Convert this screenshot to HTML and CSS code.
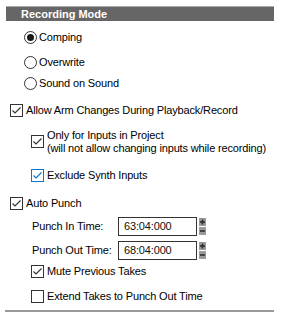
FILE: index.html
```html
<!DOCTYPE html>
<html>
<head>
<meta charset="utf-8">
<link rel="stylesheet" href="styles.css">
</head>
<body>
<div class="panel">
  <div class="header">Recording Mode</div>

  <div class="row radio-row r-comping"><span class="radio checked"></span><span class="lbl">Comping</span></div>
  <div class="row radio-row r-overwrite"><span class="radio"></span><span class="lbl">Overwrite</span></div>
  <div class="row radio-row r-sos"><span class="radio"></span><span class="lbl">Sound on Sound</span></div>

  <div class="row lvl1 r-allow"><span class="cb"><svg viewBox="0 0 11 11"><path d="M1.5 5.5 L4 8 L9.5 2.5" /></svg></span><span class="lbl">Allow Arm Changes During Playback/Record</span></div>

  <div class="row lvl2 two r-only"><span class="cb"><svg viewBox="0 0 11 11"><path d="M1.5 5.5 L4 8 L9.5 2.5" /></svg></span><span class="lbl">Only for Inputs in Project<br>(will not allow changing inputs while recording)</span></div>

  <div class="row lvl2 r-excl"><span class="cb blue"><svg viewBox="0 0 11 11"><path d="M1.5 5.5 L4 8 L9.5 2.5" /></svg></span><span class="lbl">Exclude Synth Inputs</span></div>

  <div class="row lvl1 r-auto"><span class="cb"><svg viewBox="0 0 11 11"><path d="M1.5 5.5 L4 8 L9.5 2.5" /></svg></span><span class="lbl">Auto Punch</span></div>

  <div class="row field r-in"><span class="flbl">Punch In Time:</span><span class="input">63:04:000</span><span class="spin"><svg viewBox="0 0 7 17"><rect x="0" y="0" width="7" height="8" fill="#9a9a9a"/><rect x="0" y="9" width="7" height="8" fill="#9a9a9a"/><path d="M1 4 H6 M3.5 1.5 V6.5 M1 13 H6" stroke="#2a2a2a" stroke-width="1.6"/></svg></span></div>
  <div class="row field r-out"><span class="flbl">Punch Out Time:</span><span class="input">68:04:000</span><span class="spin"><svg viewBox="0 0 7 17"><rect x="0" y="0" width="7" height="8" fill="#9a9a9a"/><rect x="0" y="9" width="7" height="8" fill="#9a9a9a"/><path d="M1 4 H6 M3.5 1.5 V6.5 M1 13 H6" stroke="#2a2a2a" stroke-width="1.6"/></svg></span></div>

  <div class="row lvl2 r-mute"><span class="cb"><svg viewBox="0 0 11 11"><path d="M1.5 5.5 L4 8 L9.5 2.5" /></svg></span><span class="lbl">Mute Previous Takes</span></div>
  <div class="row lvl2 r-extend"><span class="cb empty"></span><span class="lbl">Extend Takes to Punch Out Time</span></div>

  <div class="bottom-line"></div>
</div>
</body>
</html>
```

FILE: styles.css
```css
html, body {
  margin: 0;
  padding: 0;
  background: #ffffff;
}
body {
  font-family: "Liberation Sans", Arial, sans-serif;
  font-size: 11px;
  letter-spacing: -0.15px;
  color: #000;
  width: 287px;
  height: 312px;
  overflow: hidden;
}
.panel {
  display: flex;
  flex-direction: column;
}
.header {
  margin: 6px 13px 0 6px;
  height: 14px;
  border-top: 1px solid #a8a8a8;
  background: #666666;
  color: #ffffff;
  font-weight: bold;
  font-size: 11px;
  letter-spacing: 0;
  line-height: 14px;
  padding-left: 15px;
}
.row {
  display: flex;
  align-items: center;
  height: 16px;
  white-space: nowrap;
}
.radio-row { padding-left: 24px; }
.lvl1 { padding-left: 10px; }
.lvl2 { padding-left: 31px; }
.field { padding-left: 32px; height: 20px; }

.r-comping { margin-top: 8px; }
.r-overwrite { margin-top: 9px; }
.r-sos { margin-top: 5px; }
.r-allow { margin-top: 11px; }
.r-only { margin-top: 10px; height: 27px; }
.r-excl { margin-top: 12px; }
.r-auto { margin-top: 12px; }
.r-in { margin-top: 5px; }
.r-out { margin-top: 4px; }
.r-mute { margin-top: 3px; }
.r-extend { margin-top: 9px; }

.radio {
  width: 11px;
  height: 11px;
  border: 1px solid #333;
  border-radius: 50%;
  display: flex;
  align-items: center;
  justify-content: center;
  flex: none;
}
.radio.checked::after {
  content: "";
  width: 7px;
  height: 7px;
  border-radius: 50%;
  background: #1a1a1a;
}
.radio + .lbl { margin-left: 2px; }

.cb {
  width: 11px;
  height: 11px;
  border: 1px solid #333;
  background: #fff;
  flex: none;
  display: flex;
}
.cb svg {
  width: 11px;
  height: 11px;
  fill: none;
  stroke: #333;
  stroke-width: 1.2;
}
.cb.blue { border-color: #0078d7; }
.cb.blue svg { stroke: #0078d7; }
.cb + .lbl { margin-left: 3px; }

.two .lbl {
  line-height: 13px;
}

.flbl {
  width: 86px;
  flex: none;
}
.input {
  width: 72px;
  height: 17px;
  border: 1px solid #333;
  padding-left: 5px;
  line-height: 17px;
  box-sizing: content-box;
  flex: none;
  color: #111;
}
.spin {
  display: flex;
  margin-left: 2px;
}
.spin svg {
  width: 7px;
  height: 17px;
}
.bottom-line {
  margin: 6px 13px 0 5px;
  height: 2px;
  background: #999;
}
```
